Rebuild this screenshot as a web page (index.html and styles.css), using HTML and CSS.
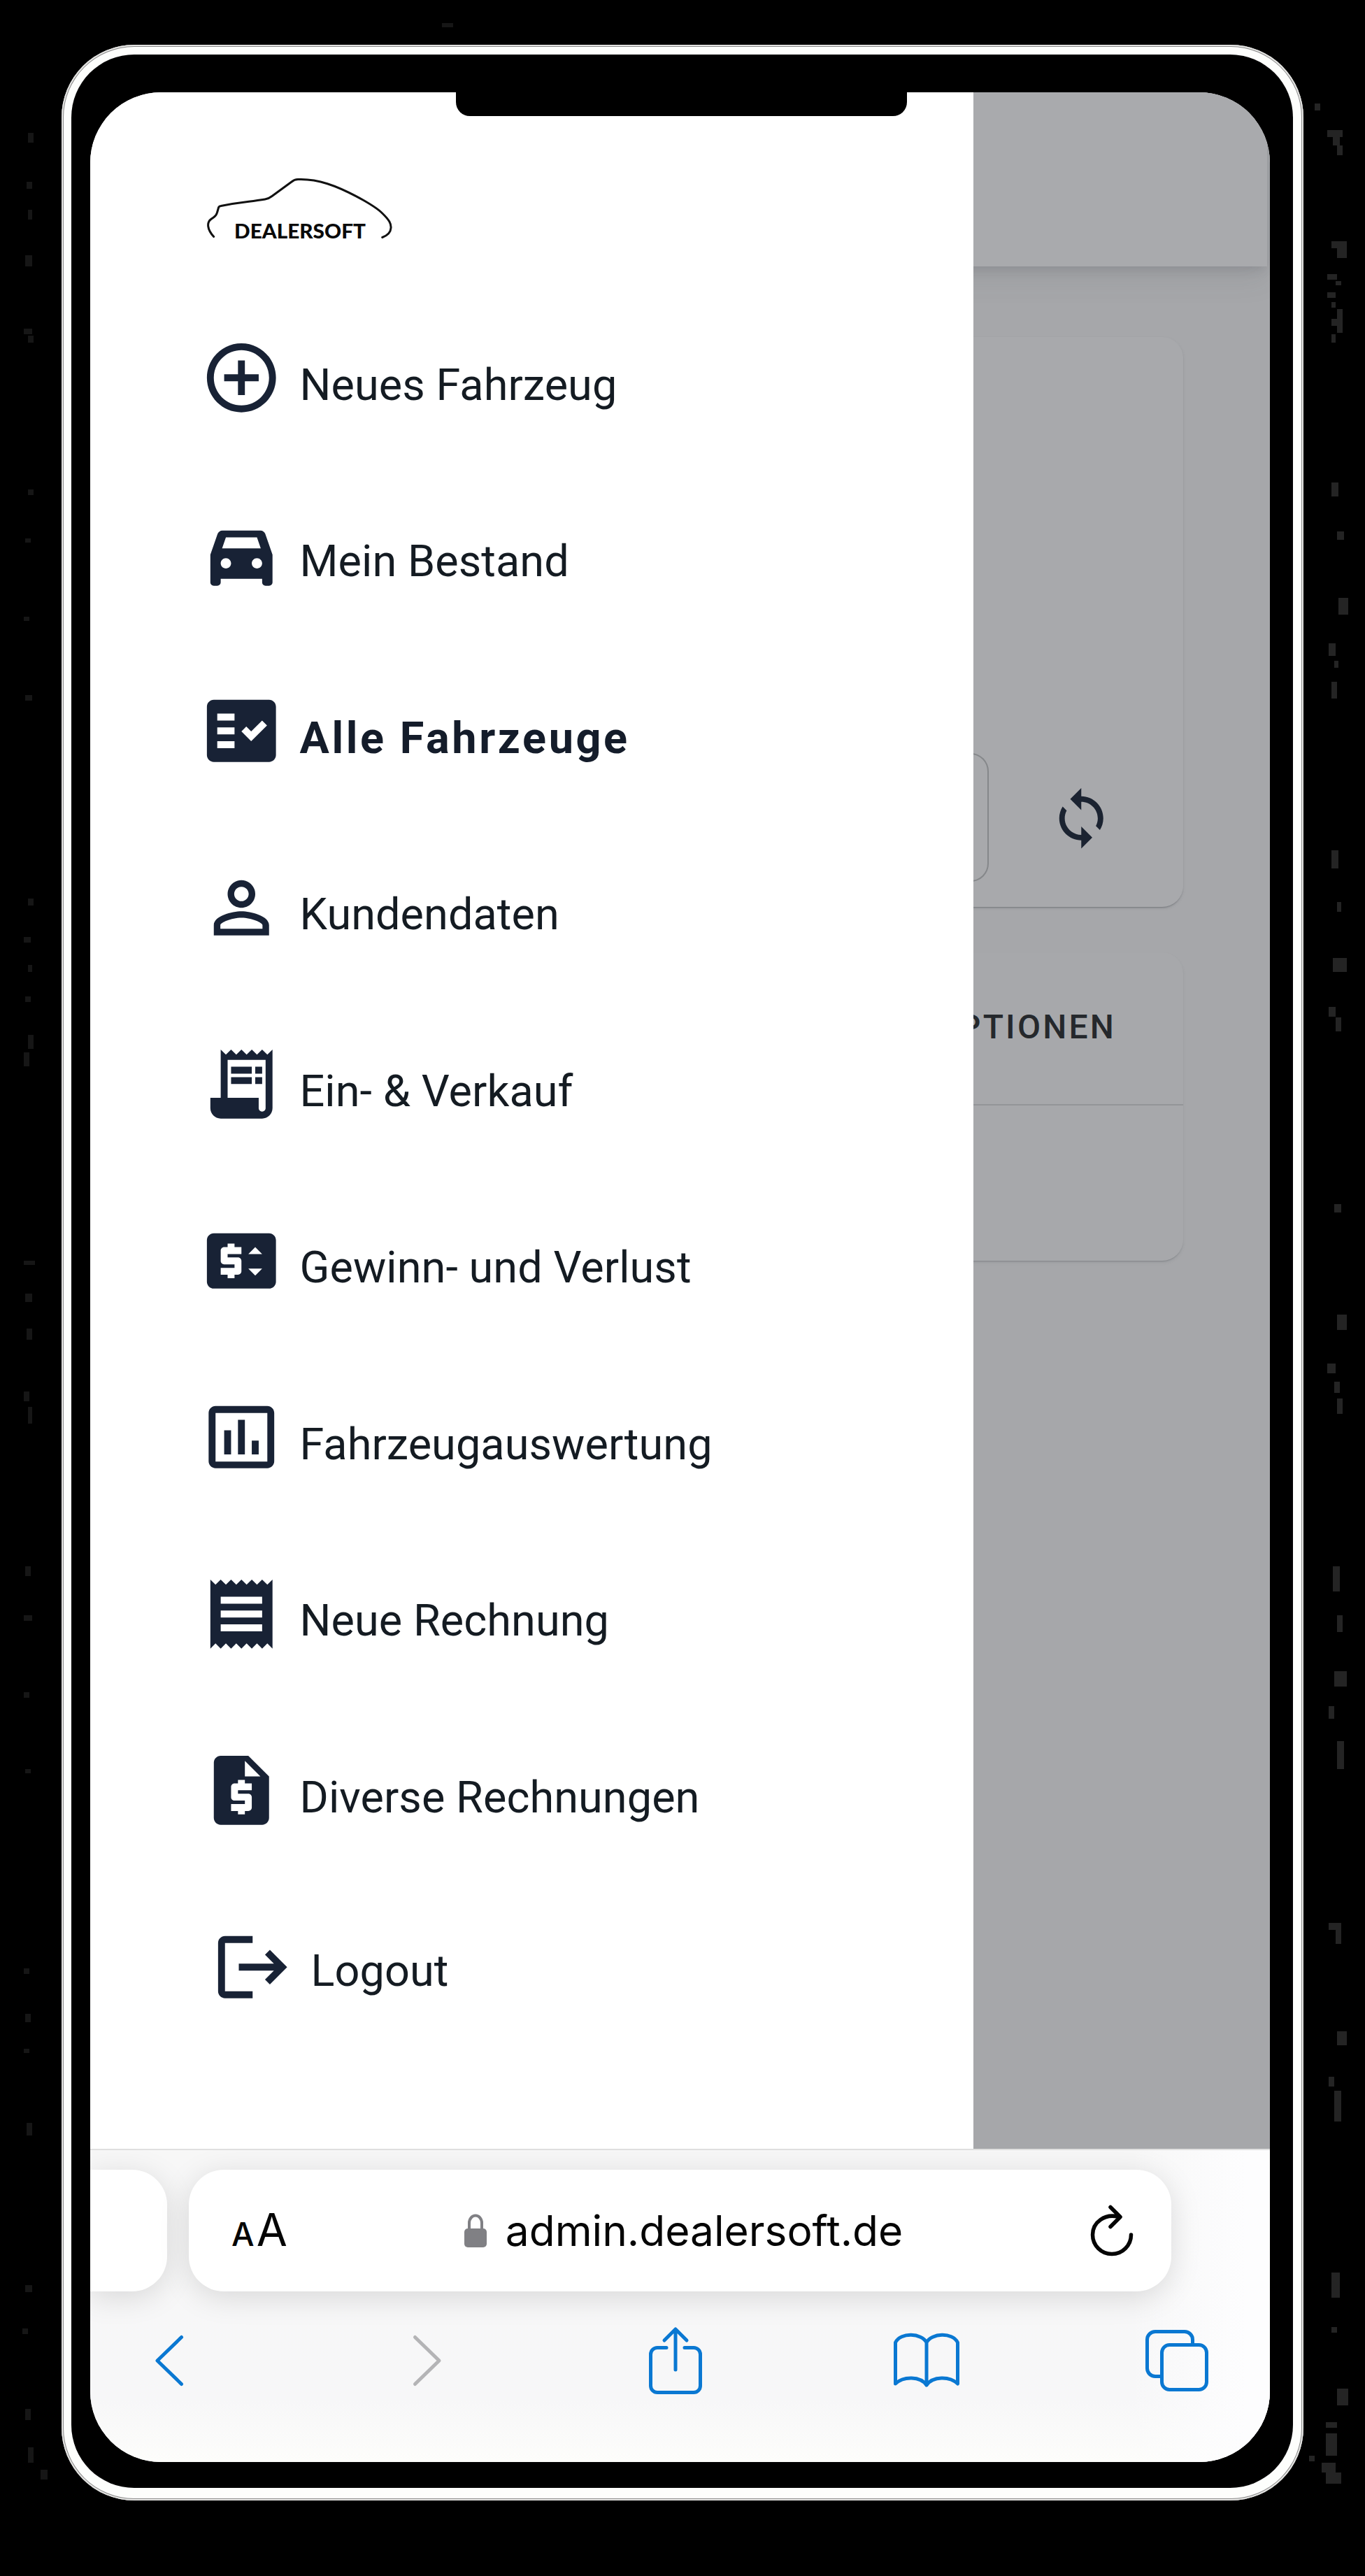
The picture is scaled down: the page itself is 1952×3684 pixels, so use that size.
FILE: index.html
```html
<!DOCTYPE html>
<html lang="de">
<head>
<meta charset="utf-8">
<title>Dealersoft</title>
<link rel="stylesheet" href="styles.css">
</head>
<body>
<svg class="specks" viewBox="0 0 1952 3684" aria-hidden="true">
  <path class="speck-dim" d="M632 33h16v6h-16zM40 190h8v14h-8zM38 260h8v10h-8zM40 300h6v14h-6zM36 365h10v16h-10zM34 470h12v8h-12zM40 480h8v10h-8zM40 700h8v8h-8zM36 770h8v6h-8zM34 882h8v6h-8zM36 994h10v8h-10zM40 1285h8v10h-8zM34 1340h10v8h-10zM40 1380h6v10h-6zM36 1425h8v8h-8zM40 1480h8v20h-8zM34 1505h8v20h-8zM34 1803h16v6h-16zM36 1850h10v12h-10zM38 1900h8v16h-8zM34 1990h8v14h-8zM40 2012h6v24h-6zM36 2240h8v14h-8zM34 2310h12v8h-12zM34 2420h8v8h-8zM36 2530h8v6h-8zM34 2815h8v8h-8zM36 2880h8v12h-8zM34 2930h8v6h-8zM38 3036h8v18h-8zM36 3268h10v10h-10zM32 3330h8v8h-8zM36 3445h8v16h-8zM40 3500h8v22h-8zM58 3532h10v14h-10z"/>
  <path d="M1880 148h8v10h-8zM1898 186h22v10h-22zM1906 196h10v12h-10zM1912 208h8v14h-8zM1904 345h22v10h-22zM1912 355h14v14h-14zM1898 392h14v8h-14zM1910 402h8v6h-8zM1898 418h12v8h-12zM1904 432h6v8h-6zM1912 442h8v34h-8zM1904 456h8v10h-8zM1904 478h6v12h-6zM1904 690h10v20h-10zM1912 760h10v12h-10zM1914 855h14v24h-14zM1900 920h10v18h-10zM1908 945h6v10h-6zM1904 975h8v24h-8zM1904 1216h10v26h-10zM1912 1290h6v14h-6zM1906 1370h20v20h-20zM1900 1440h10v14h-10zM1910 1455h8v20h-8zM1908 1722h10v12h-10zM1912 1880h14v22h-14zM1898 1950h12v14h-12zM1908 1976h8v16h-8zM1912 2000h8v22h-8zM1906 2240h10v36h-10zM1912 2310h8v24h-8zM1908 2390h18v22h-18zM1900 2440h8v18h-8zM1912 2490h10v40h-10zM1900 2750h18v10h-18zM1910 2760h8v20h-8zM1912 2905h14v20h-14zM1900 2970h8v14h-8zM1908 2990h10v44h-10zM1904 3250h12v36h-12zM1904 3328h8v8h-8zM1912 3416h16v24h-16zM1896 3464h16v8h-16zM1896 3480h16v32h-16zM1872 3512h8v8h-8zM1890 3522h20v14h-20zM1896 3536h22v16h-22z"/>
</svg>

<div class="phone">
 <div class="bezel">
  <div class="screen">
   <div class="notch"></div>

   <div class="app">
    <nav class="drawer">
     <div class="brand">
      <svg class="logo" viewBox="0 0 270 94" role="img" aria-label="Dealersoft">
       <path d="M12.700 88.500C3 78 2.500 68 8.700 63.500C13 60 16 60 17.500 54L19.500 47Q20 44.900 23 44.500C55 38 62 39 86 35Q91.500 34 96 30.500L124 10Q128 6.700 133 6.600C160 5.500 187 14 227 36.500C240 44 248 49 253.700 55C264 65 266.500 70 266 76Q265.500 85 253.700 89.500" fill="none" stroke="#111" stroke-width="3" stroke-linecap="round"/>
       <text x="42" y="91.200" textLength="188" lengthAdjust="spacingAndGlyphs">DEALERSOFT</text>
      </svg>
     </div>
     <a class="item">
      <svg class="icon" viewBox="0 0 24 24"><path d="M13 7h-2v4H7v2h4v4h2v-4h4v-2h-4V7zm-1-5C6.480 2 2 6.480 2 12s4.480 10 10 10 10-4.480 10-10S17.520 2 12 2zm0 18c-4.410 0-8-3.590-8-8s3.590-8 8-8 8 3.590 8 8-3.590 8-8 8z"/></svg>
      <span class="label">Neues Fahrzeug</span>
     </a>
     <a class="item">
      <svg class="icon" viewBox="0 0 24 24"><path d="M18.920 5.010C18.720 4.420 18.160 4 17.500 4h-11c-.66 0-1.210.42-1.420 1.010L3 11v8c0 .55.45 1 1 1h1c.55 0 1-.45 1-1v-1h12v1c0 .55.45 1 1 1h1c.55 0 1-.45 1-1v-8l-2.080-5.990zM7.500 15c-.83 0-1.500-.67-1.500-1.500S6.670 12 7.500 12s1.500.67 1.500 1.500S8.330 15 7.500 15zm9 0c-.83 0-1.500-.67-1.500-1.500s.67-1.500 1.500-1.500 1.500.67 1.500 1.500-.67 1.500-1.500 1.500zM6.400 9.200L7.500 6h9l1.100 3.200z" transform="translate(0 1)"/></svg>
      <span class="label">Mein Bestand</span>
     </a>
     <a class="item active">
      <svg class="icon" viewBox="0 0 24 24"><path fill-rule="evenodd" d="M20 3H4c-1.100 0-2 .9-2 2v14c0 1.100.9 2 2 2h16c1.100 0 2-.9 2-2V5c0-1.100-.9-2-2-2zM10 17H5v-2h5v2zm0-4H5v-2h5v2zm0-4H5V7h5v2zm4.820 6L12 12.160l1.410-1.410 1.410 1.420L17.990 9l1.420 1.420L14.820 15z"/></svg>
      <span class="label">Alle Fahrzeuge</span>
     </a>
     <a class="item">
      <svg class="icon" viewBox="0 0 24 24"><path d="M12 5.900c1.160 0 2.100.94 2.100 2.100s-.94 2.100-2.100 2.100S9.900 9.160 9.900 8s.94-2.100 2.100-2.100m0 9c2.970 0 6.100 1.460 6.100 2.100v1.100H5.900V17c0-.64 3.130-2.100 6.100-2.100M12 4C9.790 4 8 5.790 8 8s1.790 4 4 4 4-1.790 4-4-1.790-4-4-4zm0 9c-2.670 0-8 1.340-8 4v3h16v-3c0-2.660-5.330-4-8-4z"/></svg>
      <span class="label">Kundendaten</span>
     </a>
     <a class="item">
      <svg class="icon" viewBox="0 0 24 24"><path d="M19.500 3.500L18 2l-1.500 1.500L15 2l-1.500 1.500L12 2l-1.500 1.500L9 2 7.500 3.500 6 2v14H3v3c0 1.660 1.340 3 3 3h12c1.660 0 3-1.340 3-3V2l-1.500 1.500zM19 19c0 .55-.45 1-1 1s-1-.45-1-1v-3H8V5h11v14z"/><path d="M9 7h6v2H9zM16 7h2v2h-2zM9 10h6v2H9zM16 10h2v2h-2z"/></svg>
      <span class="label">Ein- &amp; Verkauf</span>
     </a>
     <a class="item">
      <svg class="icon" viewBox="0 0 24 24"><path d="M20 4H4c-1.110 0-2 .9-2 2v12c0 1.100.89 2 2 2h16c1.100 0 2-.9 2-2V6c0-1.100-.9-2-2-2zm-8 6H8v1h3c.55 0 1 .45 1 1v3c0 .55-.45 1-1 1h-1v1H8v-1H6v-2h4v-1H7c-.55 0-1-.45-1-1V9c0-.55.45-1 1-1h1V7h2v1h2v2zm4 6.250l-2-2h4l-2 2zM14 10l2-2 2 2h-4z"/></svg>
      <span class="label">Gewinn- und Verlust</span>
     </a>
     <a class="item">
      <svg class="icon" viewBox="0 0 24 24"><path d="M9 17H7v-7h2v7zm4 0h-2V7h2v10zm4 0h-2v-4h2v4zm2.500 2.100h-15V5h15v14.100zm0-16.100h-15c-1.100 0-2 .9-2 2v14c0 1.100.9 2 2 2h15c1.100 0 2-.9 2-2V5c0-1.100-.9-2-2-2z"/></svg>
      <span class="label">Fahrzeugauswertung</span>
     </a>
     <a class="item">
      <svg class="icon" viewBox="0 0 24 24"><path d="M18 17H6v-2h12v2zm0-4H6v-2h12v2zm0-4H6V7h12v2zM3 22l1.500-1.500L6 22l1.500-1.500L9 22l1.500-1.500L12 22l1.500-1.500L15 22l1.500-1.500L18 22l1.500-1.500L21 22V2l-1.500 1.500L18 2l-1.500 1.500L15 2l-1.500 1.500L12 2l-1.500 1.500L9 2 7.500 3.500 6 2 4.500 3.500 3 2v20z"/></svg>
      <span class="label">Neue Rechnung</span>
     </a>
     <a class="item">
      <svg class="icon" viewBox="0 0 24 24"><path d="M14 2H6c-1.100 0-1.990.9-1.990 2L4 20c0 1.100.89 2 1.990 2H18c1.100 0 2-.9 2-2V8l-6-6zm1 10h-4v1h3c.55 0 1 .45 1 1v3c0 .55-.45 1-1 1h-1v1h-2v-1H9v-2h4v-1h-3c-.55 0-1-.45-1-1v-3c0-.55.45-1 1-1h1V9h2v1h2v2zm-2-4V3.500L17.500 8H13z"/></svg>
      <span class="label">Diverse Rechnungen</span>
     </a>
     <a class="item logout">
      <svg class="icon" viewBox="0 0 24 24"><path d="M17 7l-1.410 1.410L18.170 11H8v2h10.170l-2.580 2.580L17 17l5-5zM4 5h8V3H4c-1.100 0-2 .9-2 2v14c0 1.100.9 2 2 2h8v-2H4V5z"/></svg>
      <span class="label">Logout</span>
     </a>
    </nav>

    <section class="page">
     <header class="topbar"></header>
     <div class="card filter">
      <div class="field"></div>
      <svg class="sync" viewBox="0 0 24 24"><path d="M12 4V1L8 5l4 4V6c3.310 0 6 2.690 6 6 0 1.010-.25 1.970-.7 2.800l1.460 1.460C19.540 15.030 20 13.570 20 12c0-4.420-3.580-8-8-8zm0 14c-3.310 0-6-2.690-6-6 0-1.010.25-1.970.7-2.800L5.240 7.740C4.460 8.970 4 10.430 4 12c0 4.420 3.580 8 8 8v3l4-4-4-4v3z"/></svg>
     </div>
     <div class="card table">
      <div class="thead">OPTIONEN</div>
     </div>
    </section>
   </div>

   <footer class="browser">
    <div class="tabs">
     <div class="tab prev"></div>
     <div class="tab current">
      <span class="reader"><small>A</small>A</span>
      <div class="address">
       <svg class="lock" viewBox="0 0 32 48"><path d="M7 23V13a9 10.500 0 0 1 18 0v10" fill="none" stroke="#808084" stroke-width="4"/><rect y="21" width="32" height="27" rx="5" fill="#808084"/></svg>
       <span class="url">admin.dealersoft.de</span>
      </div>
      <svg class="reload" viewBox="0 0 60 72"><path d="M40 16.500C20 11 2.500 24 2.500 42a27.500 27.500 0 0 0 55 0M28 2.500L42 16.500 28 30.500" fill="none" stroke="#050505" stroke-width="5.500" stroke-linecap="round" stroke-linejoin="round"/></svg>
     </div>
    </div>
    <div class="toolbar">
     <svg class="back" viewBox="0 0 40 72"><path d="M37.500 2.500L3 36l34.500 33.500"/></svg>
     <svg class="forward" viewBox="0 0 40 72"><path d="M2.500 2.500L37 36 2.500 69.500"/></svg>
     <svg class="share" viewBox="0 0 76 96"><path d="M25 29.500H12a9.500 9.500 0 0 0-9.500 9.500v45a9.500 9.500 0 0 0 9.500 9.500h52a9.500 9.500 0 0 0 9.500-9.500V39a9.500 9.500 0 0 0-9.500-9.500H51M38 61V4M22 19L38 3l16 16"/></svg>
     <svg class="book" viewBox="0 0 94 78"><path d="M47 74V13C40-.5 10-2 2.500 13v59C14 61 38 61 47 74 56 61 80 61 91.500 72V13C84-2 54-.5 47 13"/></svg>
     <svg class="windows" viewBox="0 0 90 88"><path d="M22 66.500H14A11.500 11.500 0 0 1 2.500 55V14A11.500 11.500 0 0 1 14 2.500h42A11.500 11.500 0 0 1 67.500 14v7"/><rect x="23.500" y="21.500" width="64" height="64" rx="11"/></svg>
    </div>
   </footer>
  </div>
 </div>
</div>
</body>
</html>
```
FILE: styles.css
```css
* { box-sizing: border-box; }

body {
  margin: 0;
  background: #000;
  height: 3684px;
  overflow: hidden;
  position: relative;
  font-family: Roboto, "Liberation Sans", sans-serif;
}

svg { display: block; flex: none; overflow: visible; }

.specks { position: absolute; left: 0; top: 0; width: 1952px; height: 3684px; fill: #242424; }
.speck-dim { fill: #161616; }

.phone {
  position: relative;
  width: 1776px;
  height: 3512px;
  margin: 64px 0 0 88px;
  padding: 14px 15px 18px 14px;
  border-radius: 104px;
  background: #fdfefc;
  box-shadow: inset 0 0 0 2px #e4e4e2, inset 0 0 0 3px #8a8a8a;
}

.bezel {
  height: 100%;
  padding: 54px 33px 37px 27px;
  border-radius: 90px;
  background: #000;
}

.screen {
  position: relative;
  display: flex;
  flex-direction: column;
  height: 3389px;
  border-radius: 101px;
  overflow: hidden;
  background: #fff;
}

.notch {
  position: absolute;
  left: 523px;
  top: 0;
  width: 645px;
  height: 34px;
  border-radius: 0 0 20px 20px;
  background: #000;
  z-index: 2;
}

.app { display: flex; height: 2941px; }

.drawer {
  width: 1262.5px;
  flex: none;
  padding-left: 157px;
  background: #fff;
}

.brand { height: 282px; padding: 118px 0 0 7px; }
.logo { width: 270px; height: 94px; }
.logo text { font: 900 29px Lato, sans-serif; fill: #0a0a0a; }

.item {
  display: flex;
  align-items: center;
  gap: 24px;
  height: 252.5px;
  color: #141b22;
  font-size: 63px;
  letter-spacing: .06px;
  white-space: nowrap;
}
.icon { width: 118.5px; height: 118.5px; fill: #182235; }
.label { padding-top: 20px; }
.active { font-weight: 700; letter-spacing: 3.6px; color: #141c2a; }
.logout { padding-left: 16px; }
.logout .label { padding-top: 12px; }

.page { flex: 1; overflow: hidden; background: #a6a7aa; }

.topbar {
  height: 249px;
  margin-left: -60px;
  margin-right: 4px;
  background: #a9aaad;
  box-shadow: 0 8px 14px -4px rgba(60, 64, 72, .16), 0 16px 40px rgba(60, 64, 72, .1);
}

.card {
  margin: 0 124px 0 -80px;
  border-radius: 30px;
  background: #a8a9ac;
  box-shadow: 0 2px 2px -1px rgba(80, 84, 90, .5), 0 2px 4px rgba(80, 84, 90, .14);
}
.filter {
  display: flex;
  justify-content: space-between;
  align-items: flex-end;
  height: 815px;
  margin-top: 101px;
  padding: 0 99px 36px 0;
}
.field {
  width: 102px;
  height: 184px;
  border: 2px solid #85878a;
  border-left: 0;
  border-radius: 0 26px 26px 0;
}
.sync { width: 94.5px; height: 94.5px; margin-bottom: 44px; fill: #1b2331; }

.table { height: 441px; margin-top: 65px; background: #a7a8ab; box-shadow: 0 2px 2px -1px rgba(80, 84, 90, .35), 0 3px 4px rgba(80, 84, 90, .1); }
.thead {
  display: flex;
  align-items: center;
  justify-content: flex-end;
  height: 219px;
  padding: 0 96px 4px 0;
  border-bottom: 2px solid #939598;
  font-size: 48px;
  font-weight: 500;
  letter-spacing: 3.2px;
  color: #25282c;
}

.browser {
  height: 448px;
  border-top: 2px solid #e0e0e0;
  background: linear-gradient(90deg, transparent 88%, #fdfdfe 98%), linear-gradient(#f7f7f7, #f7f7f8 80%, #fdfdfb);
}

.tabs { display: flex; gap: 31px; padding-top: 28px; }
.tab {
  height: 174px;
  border-radius: 50px;
  background: #fff;
  box-shadow: 0 8px 44px rgba(0, 0, 0, .13);
}
.prev { width: 110px; border-radius: 0 50px 50px 0; }
.current {
  display: flex;
  align-items: center;
  justify-content: space-between;
  width: 1405px;
  padding: 0 55px 0 61px;
  color: #050505;
  font-family: Inter, sans-serif;
}
.reader { width: 64px; padding-top: 4px; font-size: 64px; line-height: 72px; white-space: nowrap; }
.reader small { margin-right: 3px; font-size: 46px; font-weight: 500; }
.address { display: flex; align-items: center; gap: 27px; }
.lock { width: 32px; height: 48px; }
.url { font-size: 60.4px; line-height: 72px; }
.reload { width: 60px; height: 72px; }

.toolbar {
  display: flex;
  align-items: center;
  height: 198px;
  padding-left: 93px;
  fill: none;
  stroke: #0a78d2;
  stroke-width: 5;
  stroke-linecap: round;
  stroke-linejoin: round;
}
.back, .forward { width: 40px; height: 72px; }
.forward { margin-left: 329px; stroke: #b4b4b6; }
.share { width: 76px; height: 96px; margin-left: 297px; }
.book { width: 94px; height: 78px; margin-left: 274px; }
.windows { width: 90px; height: 88px; margin-left: 266px; }
```
